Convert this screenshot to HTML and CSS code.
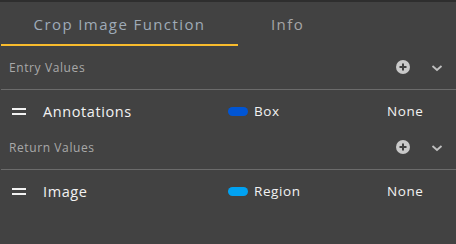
FILE: index.html
```html
<!DOCTYPE html>
<html lang="en">
<head>
    <meta charset="utf-8"/>
    <title>Crop Image Function</title>
    <link rel="stylesheet" href="styles.css">
</head>
<body>
    <div class="panel">
        <div class="tabs">
            <div class="tab active">Crop Image Function</div>
            <div class="tab">Info</div>
        </div>

        <div class="section-head">
            <span class="section-title">Entry Values</span>
            <span class="add-btn">
                <svg width="14" height="14" viewBox="0 0 14 14"><circle cx="7" cy="7" r="7" fill="#c9c9c9"/><path d="M7 3.5v7M3.5 7h7" stroke="#404040" stroke-width="2"/></svg>
            </span>
            <span class="chevron">
                <svg width="12" height="8" viewBox="0 0 12 8"><path d="M1.5 2l4.5 4 4.5-4" fill="none" stroke="#c0c0c0" stroke-width="1.8"/></svg>
            </span>
        </div>
        <div class="value-row">
            <span class="grip"></span>
            <span class="value-name">Annotations</span>
            <span class="value-type"><span class="pill pill-box"></span>Box</span>
            <span class="value-default">None</span>
        </div>

        <div class="section-head">
            <span class="section-title">Return Values</span>
            <span class="add-btn">
                <svg width="14" height="14" viewBox="0 0 14 14"><circle cx="7" cy="7" r="7" fill="#c9c9c9"/><path d="M7 3.5v7M3.5 7h7" stroke="#404040" stroke-width="2"/></svg>
            </span>
            <span class="chevron">
                <svg width="12" height="8" viewBox="0 0 12 8"><path d="M1.5 2l4.5 4 4.5-4" fill="none" stroke="#c0c0c0" stroke-width="1.8"/></svg>
            </span>
        </div>
        <div class="value-row">
            <span class="grip"></span>
            <span class="value-name">Image</span>
            <span class="value-type"><span class="pill pill-region"></span>Region</span>
            <span class="value-default">None</span>
        </div>
    </div>
</body>
</html>
```

FILE: styles.css
```css
html, body {
    margin: 0;
    height: 100%;
    background: #424242;
}

body {
    font-family: 'Open Sans', 'Liberation Sans', sans-serif;
    overflow: hidden;
}

.panel {
    border-top: 2px solid #2e2e2e;
    padding-left: 1px;
}

.tabs {
    display: flex;
    height: 44px;
}

.tab {
    padding: 0 33px;
    font-size: 15px;
    letter-spacing: 1.4px;
    line-height: 44px;
    color: #a6a6a6;
    box-sizing: border-box;
    border-bottom: 2px solid transparent;
}

.tab.active {
    width: 237px;
    text-align: center;
    padding: 0;
    color: #9fabb8;
    border-bottom-color: #f8bb2d;
}

.section-head {
    display: flex;
    align-items: center;
    height: 44px;
    padding: 0 13px 1px 8px;
    box-sizing: border-box;
    border-bottom: 1px solid #6b6b6b;
}

.section-title {
    flex: 1;
    font-size: 12px;
    letter-spacing: 0.6px;
    color: #a9a9a9;
}

.add-btn {
    display: flex;
    margin-right: 21px;
}

.chevron {
    display: flex;
    margin-top: 2px;
}

.value-row {
    display: flex;
    align-items: center;
    height: 36px;
    padding: 6px 0 0 11px;
    box-sizing: border-box;
    font-size: 14.5px;
    letter-spacing: 0.6px;
    color: #f2f2f2;
}

.grip {
    width: 14px;
    height: 7px;
    border-top: 2px solid #f2f2f2;
    border-bottom: 2px solid #f2f2f2;
    box-sizing: border-box;
    margin-right: 17px;
}

.value-name {
    width: 185px;
}

.value-type {
    display: flex;
    align-items: center;
    width: 159px;
    font-size: 13.5px;
}

.pill {
    width: 20px;
    height: 9px;
    border-radius: 5px;
    margin-right: 6px;
}

.pill-box {
    background: #0055d4;
}

.pill-region {
    background: #00a2f2;
}

.value-default {
    font-size: 13.5px;
}
```
